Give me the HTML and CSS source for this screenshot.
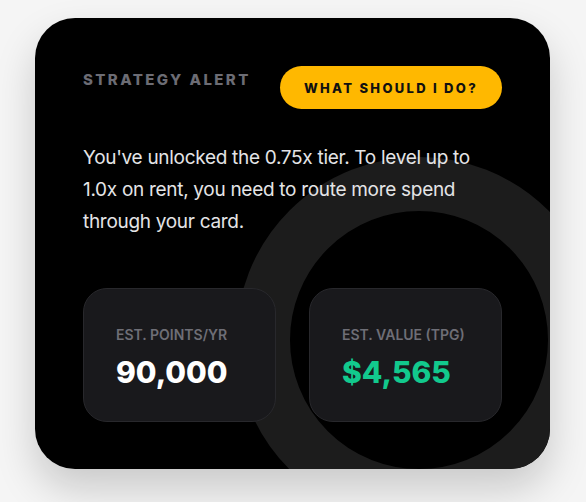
FILE: index.html
```html
<!DOCTYPE html>
<html lang="en">
<head>
    <meta charset="UTF-8">
    <meta name="viewport" content="width=device-width, initial-scale=1.0">
    <title>Strategy Alert</title>
    <link rel="stylesheet" href="styles.css">
</head>
<body>

    <section class="alert-card">
        <div class="alert-card__ring"></div>

        <div class="alert-card__head">
            <span class="alert-card__label">Strategy Alert</span>
            <button class="alert-card__btn">What should I do?</button>
        </div>

        <p class="alert-card__text">You've unlocked the 0.75x tier. To level up to 1.0x on rent, you need to route more spend through your card.</p>

        <div class="stats">
            <div class="stat">
                <div class="stat__label">Est. Points/Yr</div>
                <div class="stat__value">90,000</div>
            </div>
            <div class="stat">
                <div class="stat__label">Est. Value (TPG)</div>
                <div class="stat__value stat__value--green">$4,565</div>
            </div>
        </div>
    </section>

</body>
</html>
```

FILE: styles.css
```css
* {
    box-sizing: border-box;
}

body {
    font-family: 'Inter', 'Liberation Sans', sans-serif;
    background: #f5f5f5;
    margin: 0;
    padding: 18px 36px 33px 35px;
}

.alert-card {
    position: relative;
    overflow: hidden;
    background: #000;
    color: #fff;
    border-radius: 40px;
    padding: 48px;
    height: 451px;
    box-shadow: 0 20px 40px rgba(0, 0, 0, 0.18);
}

/* decorative ring in the corner */
.alert-card__ring {
    position: absolute;
    right: -52px;
    bottom: -54px;
    width: 366px;
    height: 366px;
    border: 54px solid #1c1c1c;
    border-radius: 50%;
}

.alert-card__head {
    position: relative;
    display: flex;
    justify-content: space-between;
    align-items: flex-start;
}

.alert-card__label {
    margin-top: 4px;
    font-size: 15px;
    font-weight: 800;
    letter-spacing: 2.4px;
    text-transform: uppercase;
    color: #6c6c74;
}

.alert-card__btn {
    background: #ffb800;
    color: #111;
    border: none;
    border-radius: 999px;
    height: 43px;
    width: 222px;
    font-family: inherit;
    font-size: 13px;
    font-weight: 800;
    letter-spacing: 2.3px;
    text-transform: uppercase;
    cursor: pointer;
}

.alert-card__text {
    position: relative;
    margin: 33px 0 0;
    font-size: 19px;
    line-height: 32px;
    letter-spacing: -0.3px;
    color: #e4e4e6;
}

.stats {
    position: relative;
    display: grid;
    grid-template-columns: 1fr 1fr;
    gap: 33px;
    margin-top: 50px;
}

.stat {
    height: 134px;
    background: #19191c;
    border: 1px solid #28282c;
    border-radius: 24px;
    padding: 37px 32px;
}

.stat__label {
    font-size: 14px;
    font-weight: 600;
    text-transform: uppercase;
    color: #6e6e76;
}

.stat__value {
    margin-top: 11px;
    font-size: 30px;
    font-weight: 800;
    color: #fff;
}

.stat__value--green {
    color: #12c98d;
}
```
